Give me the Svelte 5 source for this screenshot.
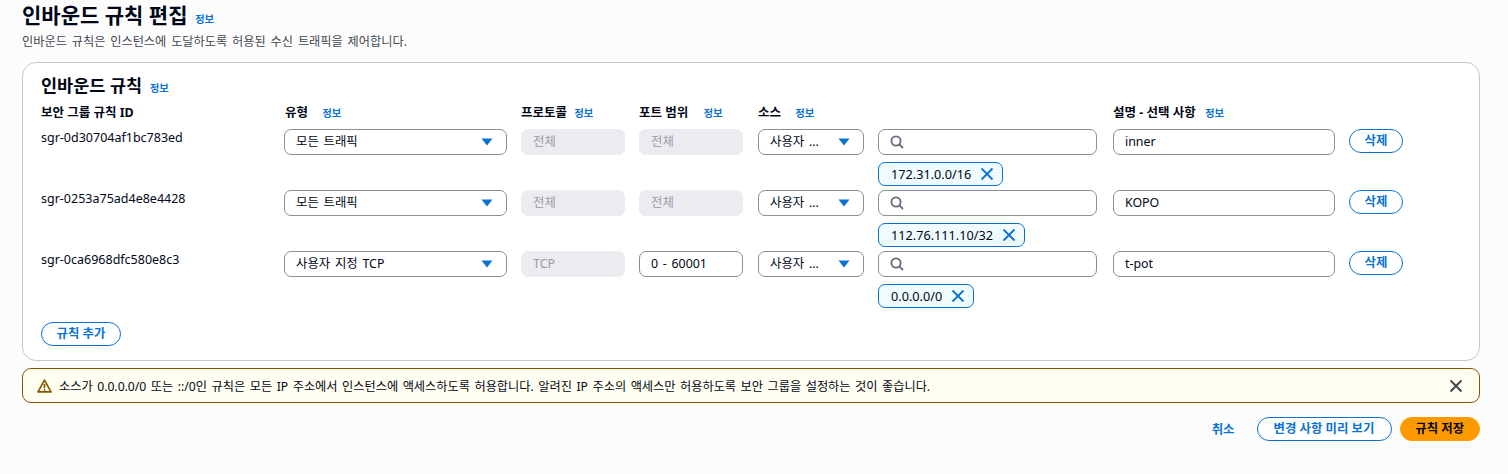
<script>
  const rules = [
    { id: 'sgr-0d30704af1bc783ed', type: '모든 트래픽', proto: '전체', port: '전체', portEditable: false, cidr: '172.31.0.0/16', desc: 'inner' },
    { id: 'sgr-0253a75ad4e8e4428', type: '모든 트래픽', proto: '전체', port: '전체', portEditable: false, cidr: '112.76.111.10/32', desc: 'KOPO' },
    { id: 'sgr-0ca6968dfc580e8c3', type: '사용자 지정 TCP', proto: 'TCP', port: '0 - 60001', portEditable: true, cidr: '0.0.0.0/0', desc: 't-pot' }
  ];
</script>

<div class="page">
  <header class="head">
    <h1>인바운드 규칙 편집 <a class="info">정보</a></h1>
    <p>인바운드 규칙은 인스턴스에 도달하도록 허용된 수신 트래픽을 제어합니다.</p>
  </header>

  <section class="card">
    <h2>인바운드 규칙 <a class="info">정보</a></h2>
    <div class="grid labels">
      <div class="lab">보안 그룹 규칙 ID</div>
      <div class="lab">유형 <a class="info i1">정보</a></div>
      <div class="lab">프로토콜 <a class="info i2">정보</a></div>
      <div class="lab">포트 범위 <a class="info i3">정보</a></div>
      <div class="lab">소스 <a class="info i4">정보</a></div>
      <div class="lab"></div>
      <div class="lab">설명 - 선택 사항 <a class="info i5">정보</a></div>
      <div></div>
    </div>
    {#each rules as r}
      <div class="grid row">
        <div class="rid">{r.id}</div>
        <div class="field sel wide">
          <span>{r.type}</span>
          <svg class="caret" width="12" height="8" viewBox="0 0 12 8"><path d="M0.5 0.5h11L6 7.5z" fill="#0972d3" /></svg>
        </div>
        <div class="field off">{r.proto}</div>
        {#if r.portEditable}
          <div class="field">{r.port}</div>
        {:else}
          <div class="field off">{r.port}</div>
        {/if}
        <div class="field sel">
          <span>사용자 ...</span>
          <svg class="caret" width="12" height="8" viewBox="0 0 12 8"><path d="M0.5 0.5h11L6 7.5z" fill="#0972d3" /></svg>
        </div>
        <div class="srcwrap">
          <div class="field search">
            <svg width="14" height="14" viewBox="0 0 14 14" fill="none" stroke="#5f6b7a" stroke-width="1.8"><circle cx="6" cy="6" r="4.6" /><path d="M9.4 9.4 13 13" /></svg>
          </div>
          <div class="token">
            <span>{r.cidr}</span>
            <svg width="14" height="14" viewBox="0 0 14 14" fill="none" stroke="#0972d3" stroke-width="1.8"><path d="M1.5 1.5l11 11M12.5 1.5l-11 11" /></svg>
          </div>
        </div>
        <div class="field">{r.desc}</div>
        <div><button class="btn del">삭제</button></div>
      </div>
    {/each}
    <button class="btn add">규칙 추가</button>
  </section>

  <div class="alert">
    <svg width="15" height="14" viewBox="0 0 15 14" fill="none" stroke="#855900" stroke-width="1.7"><path d="M7.5 1.2 14 12.9H1z" stroke-linejoin="round" /><path d="M7.5 5v4.2M7.5 10.2v1.5" /></svg>
    <span class="amsg">소스가 0.0.0.0/0 또는 ::/0인 규칙은 모든 IP 주소에서 인스턴스에 액세스하도록 허용합니다. 알려진 IP 주소의 액세스만 허용하도록 보안 그룹을 설정하는 것이 좋습니다.</span>
    <svg class="aclose" width="14" height="14" viewBox="0 0 14 14" fill="none" stroke="#424650" stroke-width="1.9"><path d="M1.5 1.5l11 11M12.5 1.5l-11 11" /></svg>
  </div>

  <div class="actions">
    <button class="link">취소</button>
    <button class="btn prev">변경 사항 미리 보기</button>
    <button class="btn save">규칙 저장</button>
  </div>
</div>

<style>
  :global(body) {
    margin: 0;
    background: #fcfcfd;
  }
  .page {
    box-sizing: border-box;
    width: 1508px;
    height: 474px;
    padding: 0 28px 0 22px;
    overflow: hidden;
    color: #000716;
    font-family: "Noto Sans", "Noto Sans CJK KR", sans-serif;
    font-size: 12px;
  }
  a.info {
    color: #0972d3;
    font-size: 10.4px;
    font-weight: 700;
    margin-left: 4px;
    vertical-align: baseline;
    word-spacing: 0;
    letter-spacing: 0;
  }
  h1 {
    margin: 0;
    font-size: 21px;
    line-height: 30px;
    font-weight: 700;
    height: 30px;
  }
  h1 a.info { margin-left: 2px; }
  .head p {
    margin: 0;
    font-size: 12.2px;
    word-spacing: 1.7px;
    line-height: 16px;
    height: 32px;
    padding-top: 4px;
    box-sizing: border-box;
    color: #414750;
  }
  .card {
    box-sizing: border-box;
    height: 299px;
    background: #fff;
    border: 1px solid #c6c6cd;
    border-radius: 14px;
    padding: 11px 18px 0;
  }
  h2 {
    margin: 0;
    font-size: 17.5px;
    line-height: 22px;
    font-weight: 700;
    height: 31px;
  }
  h2 a.info { margin-left: 3px; }
  .grid {
    display: grid;
    grid-template-columns: 243px 237px 118px 119px 120px 235px 237px 60px;
  }
  .labels { height: 24px; align-items: start; }
  .lab {
    font-size: 12.5px;
    font-weight: 700;
    line-height: 16px;
    white-space: nowrap;
  }
  .lab:nth-child(2) { padding-left: 1px; }
  .lab a.info { margin-left: 0; }
  .i1 { padding-left: 11px; }
  .i2 { padding-left: 4px; }
  .i3 { padding-left: 12px; }
  .i4 { padding-left: 11px; }
  .i5 { padding-left: 6px; }
  .row {
    height: 61px;
    align-items: start;
  }
  .rid {
    font-size: 12.5px;
    line-height: 16px;
    padding-top: 1px;
  }
  .field {
    box-sizing: border-box;
    height: 26px;
    border: 1px solid #8c8c94;
    border-radius: 7px;
    padding: 0 11px;
    font-size: 12.4px;
    word-spacing: 1.5px;
    line-height: 24px;
    background: #fff;
    display: flex;
    align-items: center;
    white-space: nowrap;
  }
  .row > .field:nth-child(3),
  .row > .field:nth-child(4) { width: 104px; }
  .row > .wide { width: 223px; }
  .row > .field:nth-child(5) { width: 106px; }
  .row > .field:nth-child(7) { width: 222px; }
  .sel { justify-content: space-between; }
  .caret { margin-right: 2px; }
  .off {
    background: #ebebf0;
    border-color: #ebebf0;
    color: #9a9aa3;
  }
  .srcwrap {
    width: 219px;
    display: flex;
    flex-direction: column;
    align-items: flex-start;
    gap: 7px;
  }
  .search { width: 219px; padding: 0 11px; }
  .token {
    box-sizing: border-box;
    height: 24px;
    border: 1px solid #0972d3;
    border-radius: 7px;
    background: #f0fbff;
    padding: 0 8px 0 12px;
    display: inline-flex;
    align-items: center;
    gap: 9px;
    font-size: 12.7px;
    white-space: nowrap;
  }
  .btn {
    box-sizing: border-box;
    height: 24px;
    border-radius: 12px;
    border: 1px solid #0972d3;
    background: #fff;
    color: #0972d3;
    font-family: inherit;
    font-size: 12.4px;
    font-weight: 700;
    line-height: 1;
    padding: 0;
  }
  .del { width: 54px; margin-left: -1px; }
  .add { display: block; width: 80px; margin: 10px 0 0; }
  .alert {
    box-sizing: border-box;
    margin-top: 7px;
    height: 35px;
    border: 1px solid #855900;
    border-radius: 9px;
    background: #fffef0;
    display: flex;
    align-items: center;
    padding: 0 16px 0 14px;
    gap: 7px;
    font-size: 12.2px;
    word-spacing: 1.35px;
  }
  .amsg { flex: 1; white-space: nowrap; }
  .actions {
    margin-top: 14px;
    display: flex;
    justify-content: flex-end;
    align-items: center;
    height: 24px;
  }
  .link {
    border: 0;
    background: none;
    color: #0972d3;
    font-family: inherit;
    font-size: 12.4px;
    font-weight: 700;
    padding: 0;
    margin-right: 22px;
  }
  .prev { width: 135px; margin-right: 8px; }
  .save {
    width: 80.5px;
    background: #ff9900;
    border-color: #ff9900;
    color: #000716;
  }
</style>
